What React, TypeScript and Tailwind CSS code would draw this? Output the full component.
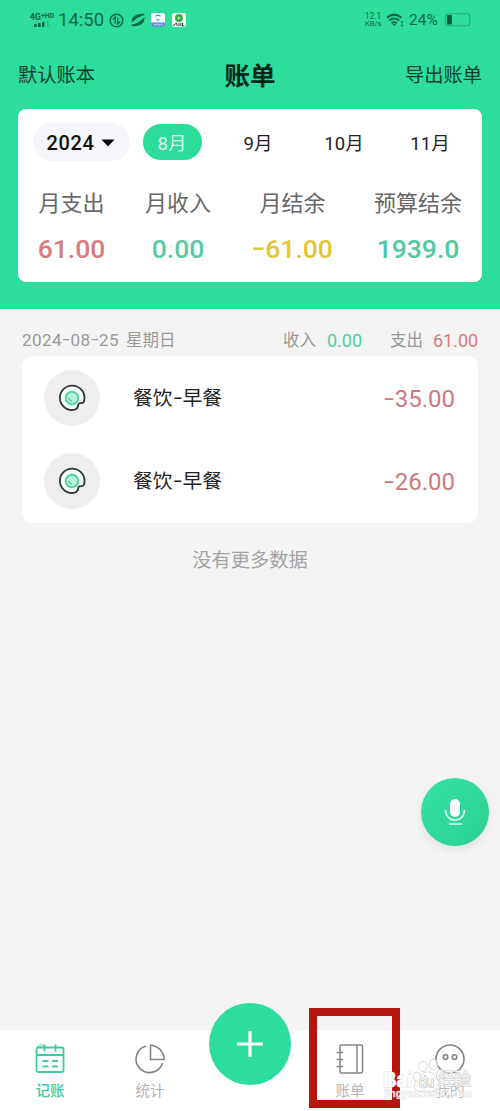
import type { ReactNode } from "react";

const FONT = "font-[Roboto,'Noto_Sans_CJK_SC',sans-serif]";

const MONTHS = ["8月", "9月", "10月", "11月"];

const TOTALS = [
  { label: "月支出", value: "61.00", color: "text-[#d97b7c]" },
  { label: "月收入", value: "0.00", color: "text-[#5cc9a3]" },
  { label: "月结余", value: "-61.00", color: "text-[#e3c637]" },
  { label: "预算结余", value: "1939.0", color: "text-[#52c8a0]" },
];

const RECORDS = [
  { name: "餐饮-早餐", amount: "-35.00" },
  { name: "餐饮-早餐", amount: "-26.00" },
];

// Roboto's hyphen is too short next to the digits, so it is stretched
function Dashed({ text }: { text: string }) {
  return text.split("-").map((part, i) => (
    <span key={i}>
      {i > 0 && <span className="relative -top-px inline-block w-[0.5em] origin-center scale-x-150 text-center">-</span>}
      {part}
    </span>
  ));
}

function StatusBar() {
  return (
    <div className="flex h-10 items-center justify-between px-[29px] text-[#12684a]">
      <div className="flex items-center">
        <div className="flex w-[26px] flex-col items-center">
          <span className="flex items-start whitespace-nowrap text-[9px] font-bold leading-[8px]">
            4G<span className="text-[7px] leading-[6px]">+</span>
            <span className="text-[7px] leading-[7px]">HD</span>
          </span>
          <svg width="18" height="6" viewBox="0 0 18 6" fill="currentColor">
            <rect x="1" y="3" width="2.6" height="3" />
            <rect x="5" y="2" width="2.6" height="4" />
            <rect x="9" y="1" width="2.6" height="5" />
            <rect x="14" y="0" width="1.6" height="6" opacity=".3" />
          </svg>
        </div>
        <span className="ml-[3px] w-[47px] whitespace-nowrap text-[18.5px] leading-5">14:50</span>
        <svg width="15" height="15" viewBox="0 0 15 15" className="ml-[4px]" fill="none" stroke="currentColor" strokeWidth="1.5">
          <circle cx="7.5" cy="7.5" r="6.3" />
          <path d="M3.8 6.5 6.3 4v6.6M11.2 8.5 8.7 11V4.4" />
        </svg>
        <svg width="14" height="14" viewBox="0 0 14 14" className="ml-[7px]" fill="currentColor">
          <path d="M.8 9.6C-.5 4.5 5 0 12.8.8 13.6 1 13.7 1.6 13.5 2.2 8.5 2.8 4.5 6 .8 9.6Z" />
          <path d="M13.4 4.2C14.5 9.5 9 14 1.3 13.2.5 13 .4 12.4.6 11.8 5.5 11 9.5 8 13.4 4.2Z" />
        </svg>
        <svg width="14" height="14" viewBox="0 0 14 14" className="ml-[6px]">
          <rect width="14" height="14" rx="2" fill="#eefaff" />
          <path d="M0 9.6h14V12a2 2 0 0 1-2 2H2a2 2 0 0 1-2-2Z" fill="#6b8fe0" />
          <path d="M4.5 3q2.5-1.5 5 0M5.500 6.500q1.500 1.500 3 0" stroke="#53718c" fill="none" />
          <path d="M3 11.8h8" stroke="#e7efff" strokeDasharray="1.5 .8" />
        </svg>
        <svg width="14" height="14" viewBox="0 0 14 14" className="ml-[7px]">
          <rect width="14" height="14" rx="2" fill="#eefbee" />
          <circle cx="7" cy="5" r="3.9" fill="#31a862" />
          <path d="m5.8 3.2 3 1.8-3 1.8Z" fill="#d7ec58" />
          <path d="M1 12.8 4.5 10l.8 3M7 10v3M8.8 10v3M10.5 10v3l2-.5" stroke="#304333" fill="none" />
        </svg>
      </div>

      <div className="flex items-center">
        <div className="w-[17px] whitespace-nowrap text-[8.3px] leading-[8px]">
          <div>12.1</div>
          <div className="text-[7.5px]">KB/s</div>
        </div>
        <svg width="18" height="14" viewBox="0 0 18 14" className="ml-[4px]" fill="none" stroke="currentColor" strokeWidth="2">
          <path d="M1 4.8Q8.2-1.5 15.5 4.8M3.2 7.6q5-4.2 10 0M5.6 10.3q2.6-2.2 5.2 0" />
          <path d="m6.3 11 2 2.2 2-2.2Z" fill="currentColor" stroke="none" />
          <path d="M16 8.2v2M16 11.4v2" strokeWidth="1.5" />
        </svg>
        <span className="ml-[5px] w-[31px] whitespace-nowrap text-[15.5px] leading-5">24%</span>
        <svg width="26" height="14" viewBox="0 0 26 14" className="ml-[5px]">
          <rect x=".75" y=".75" width="24" height="12" rx="2.5" fill="none" stroke="#25a97a" strokeWidth="1.2" />
          <rect x="2" y="2" width="5" height="9.6" rx="1" fill="#0e5c41" />
        </svg>
      </div>
    </div>
  );
}

function Summary() {
  return (
    <section className="mx-[18px] h-[173px] rounded-lg bg-white pt-3.5">
      <div className="flex h-[38px] items-center">
        <button className="ml-[15px] flex h-[38px] w-[97px] items-center rounded-full bg-[#f5f6fa] pl-[13px] pt-0.5 text-[20px] font-medium text-[#111]">
          <span className="w-[49px] tracking-[0.6px]">2024</span>
          <svg width="14" height="8" viewBox="0 0 14 8" className="ml-[6px]">
            <path d="M.5.5h13L7 7.5Z" fill="#050505" />
          </svg>
        </button>
        <div className="-ml-px flex text-[18.5px] text-[#222]">
          {MONTHS.map((month, i) => (
            <div key={month} className="flex w-[86px] justify-center">
              <span
                className={
                  i === 0
                    ? "flex h-9 w-[59px] items-center justify-center rounded-full bg-[#2cdc9b] pt-[5px] text-[#d5fbea]"
                    : "flex h-9 items-center pt-[5px]"
                }
              >
                {month}
              </span>
            </div>
          ))}
        </div>
      </div>
      <div className="mt-[27px] grid grid-cols-[107px_106px_123px_128px] text-center">
        {TOTALS.map((item) => (
          <div key={item.label}>
            <div className="text-[22px] leading-8 text-[#666]">{item.label}</div>
            <div className={`mt-[13px] text-[26.5px] font-medium leading-8 ${item.color}`}>
              <Dashed text={item.value} />
            </div>
          </div>
        ))}
      </div>
    </section>
  );
}

function BreakfastIcon() {
  return (
    <svg width="28" height="28" viewBox="0 0 28 28" fill="none">
      <path
        d="M19.8 22.8c-.5 1.7-2 3.2-5.8 3.2A12.3 12.2 0 1 1 26.5 13.7c0 2.2-.2 3.8-1 4.7-1.2 1.2-3.2.3-4.6 1.2-1 .7-.7 2.1-1.1 3.2Z"
        fill="#f5fffb"
        stroke="#303735"
        strokeWidth="1.8"
      />
      <circle cx="14" cy="14" r="8" fill="#d3f8ea" />
      <circle cx="14" cy="14" r="6.2" fill="#b8f3dc" stroke="#48c69a" strokeWidth="1.5" />
      <path d="M10.7 13.8c.2 2 1.5 3.1 3.2 3.2" stroke="#48c69a" strokeWidth="1.3" />
    </svg>
  );
}

function DayRecords() {
  return (
    <section className="px-[22px]">
      <div className="flex h-[47px] items-center pt-[17px] text-[16.5px] text-[#999]">
        <span className="flex items-baseline whitespace-nowrap">
          <span className="mr-[5px] w-[99px] text-[17px] tracking-[0.45px]">
            <Dashed text="2024-08-25" />
          </span>
          星期日
        </span>
        <span className="ml-auto">收入</span>
        <span className="-mt-0.5 ml-[11px] w-[35px] text-[18px] text-[#4fd0a2]">0.00</span>
        <span className="ml-[28px]">支出</span>
        <span className="-mt-0.5 ml-[10px] w-[45px] text-[18px] text-[#d97b80]">61.00</span>
      </div>
      <div className="h-[167px] rounded-[10px] bg-white">
        {RECORDS.map((record) => (
          <div key={record.amount} className="flex h-[83px] items-center pl-[22px] pr-[23px]">
            <div className="flex size-14 items-center justify-center rounded-full bg-[#eee]">
              <BreakfastIcon />
            </div>
            <span className="ml-[33px] pt-[3px] text-[19.8px] text-[#222]">
              <Dashed text={record.name} />
            </span>
            <span className="ml-auto pt-0.5 text-[24px] text-[#cd797c]">
              <Dashed text={record.amount} />
            </span>
          </div>
        ))}
      </div>
      <p className="pt-[23px] text-center text-[19.3px] leading-[30px] text-[#a3a3a3]">没有更多数据</p>
    </section>
  );
}

function NavItem({ label, active, children }: { label: string; active?: boolean; children: ReactNode }) {
  return (
    <div className={`flex w-[100px] flex-col items-center pt-[13px] ${active ? "text-[#43cc9b]" : "text-[#b5b5b5]"}`}>
      {children}
      <span className={`mt-[6px] text-[14.5px] leading-[22px] ${active ? "font-medium" : ""}`}>{label}</span>
    </div>
  );
}

function Watermark() {
  return (
    <svg
      width="110"
      height="56"
      viewBox="0 0 110 56"
      className="absolute left-[382px] top-[21px] font-['Liberation_Sans','Noto_Sans_CJK_SC',sans-serif]"
      fill="#fff"
      stroke="#cacaca"
      strokeWidth="1"
      paintOrder="stroke"
    >
      <g fillOpacity=".6">
        <ellipse cx="35" cy="26" rx="3.6" ry="4.8" transform="rotate(-20 35 26)" />
        <ellipse cx="41" cy="15.5" rx="4" ry="5.2" />
        <ellipse cx="51.5" cy="13.5" rx="4.2" ry="5.2" transform="rotate(10 51.5 13.5)" />
        <ellipse cx="58.5" cy="23.5" rx="3.8" ry="5.2" transform="rotate(20 58.5 23.5)" />
        <path d="M46 21c5 0 6 4 9 7 5 4 4 12-3 12.500-5 .3-8-.5-13 0-7 .3-8-7-3.500-11.500 4-4 5.500-8 10.500-8Z" />
      </g>
      <text x="1" y="36" fontSize="22" fontWeight="700" textLength="29" lengthAdjust="spacingAndGlyphs" stroke="#dedede">
        Bai
      </text>
      <text x="37" y="36" fontSize="14" textLength="15" lengthAdjust="spacingAndGlyphs" stroke="#aaa">
        du
      </text>
      <text x="56" y="34" fontSize="17" textLength="33" fillOpacity=".85">
        经验
      </text>
      <text x="2" y="46" fontSize="10" fontWeight="700" textLength="88" strokeWidth=".5" fillOpacity=".8">
        jingyan.baidu.com
      </text>
    </svg>
  );
}

function TabBar() {
  return (
    <nav className="relative flex h-[81px] bg-white">
      <NavItem label="记账" active>
        <svg width="32" height="32" viewBox="0 0 32 32" fill="none" stroke="#43c99b" strokeWidth="1.8">
          <path d="M2.5 12V4.5h8V1C5-1 0 3 2.5 12Z" fill="#a8f3d8" stroke="none" />
          <rect x="2.5" y="4.5" width="27" height="24.5" rx="2" />
          <path d="M2.5 12h27M10.5 1.5v7M21.5 1.5v7M8.5 18h6M18 18h6M8.5 23.5h6M18 23.5h6" />
        </svg>
      </NavItem>
      <NavItem label="统计">
        <svg width="32" height="32" viewBox="0 0 32 32" fill="none" stroke="#858585" strokeWidth="1.6">
          <path d="M12 3A13.5 13.5 0 1 0 28.5 20" />
          <path d="M16.5 2.2A14 14 0 0 1 30 16.5H16.5Z" />
        </svg>
      </NavItem>
      <div className="w-[100px]" />
      <NavItem label="账单">
        <svg width="32" height="32" viewBox="0 0 32 32" fill="none" stroke="#858585" strokeWidth="1.5">
          <rect x="6" y="2" width="22.5" height="28" rx="1.5" />
          <path d="M23 2v28M2.5 9.5H9M2.5 16.5H9M2.5 23.5H9" />
        </svg>
      </NavItem>
      <NavItem label="我的">
        <svg width="32" height="32" viewBox="0 0 32 32" fill="none" stroke="#858585" strokeWidth="1.6">
          <circle cx="16" cy="16" r="14" />
          <circle cx="11.5" cy="14" r="2.3" />
          <circle cx="20.5" cy="14" r="2.3" />
        </svg>
      </NavItem>

      <button
        aria-label="添加"
        className="absolute -top-[27px] left-[209px] flex size-[82px] items-center justify-center rounded-full bg-[#2cdd9e]"
      >
        <svg width="28" height="28" viewBox="0 0 28 28" stroke="#fff" strokeWidth="3.2">
          <path d="M14 1v26M1 14h26" />
        </svg>
      </button>
      <div className="absolute -top-[22px] left-[309px] h-[100px] w-[91px] border-[8px] border-[#b5170f]" />
      <Watermark />
    </nav>
  );
}

export default function App() {
  return (
    <div className={`relative flex h-[1111px] w-[500px] flex-col overflow-hidden bg-[#f4f4f4] ${FONT}`}>
      <header className="h-[309px] shrink-0 bg-[#2cdd9c]">
        <StatusBar />
        <div className="grid h-[69px] grid-cols-3 items-center px-[18px] pt-1 text-[19.3px] text-[#10402d]">
          <span>默认账本</span>
          <h1 className="text-center text-[25.5px] font-bold text-[#06251a]">账单</h1>
          <span className="text-right">导出账单</span>
        </div>
        <Summary />
      </header>
      <main className="flex-1">
        <DayRecords />
      </main>
      <TabBar />
      <button
        aria-label="语音记账"
        className="absolute left-[421px] top-[778px] flex size-[68px] items-center justify-center rounded-full bg-linear-to-br from-[#35e3a5] to-[#2bcf91] shadow-[0_4px_10px_rgba(0,0,0,0.08)]"
      >
        <svg width="22" height="28" viewBox="0 0 22 28" fill="none" stroke="#e5fff5" strokeWidth="1.6">
          <rect x="6" y="1" width="10" height="18" rx="5" fill="#fff" stroke="none" />
          <path d="M1.5 12c0 13.5 19 13.5 19 0M5 26h13" />
        </svg>
      </button>
    </div>
  );
}
